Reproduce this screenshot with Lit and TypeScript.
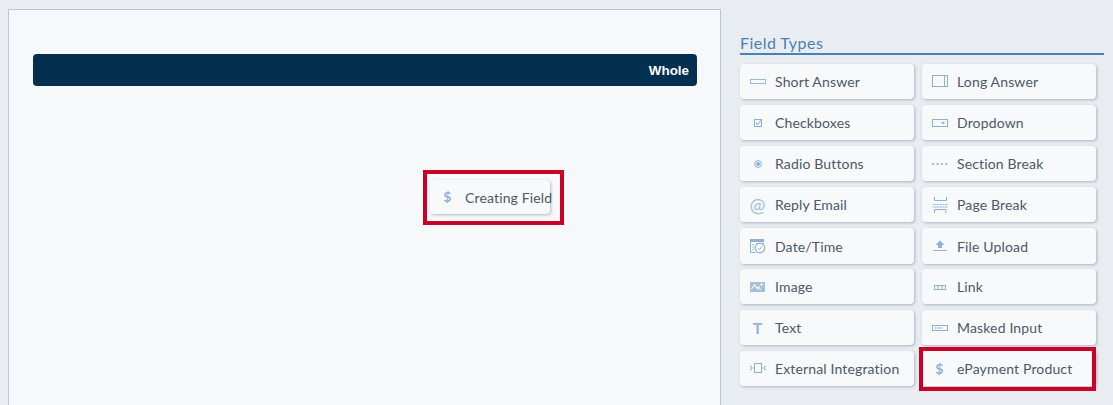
import { LitElement, html, css, svg } from "lit";
import { customElement } from "lit/decorators.js";

const s = (body: unknown) => html`<svg class="ico" viewBox="0 0 18 18" width="18" height="18" fill="none" stroke="#8fb0d3" stroke-width="1">${body}</svg>`;

const icons: Record<string, unknown> = {
  short: s(svg`<rect x="1.5" y="6.5" width="15" height="4" stroke="#9db8d6"/>`),
  long: s(svg`<rect x="1.5" y="2.5" width="15" height="11"/><path d="M13.5 3v10" />`),
  check: s(svg`<rect x="5.5" y="5.5" width="7" height="7"/><path d="M7 9l1.5 1.5L12 6.5" stroke-width="1.1"/>`),
  drop: s(svg`<rect x="1.5" y="5.5" width="15" height="7"/><path d="M10 8h4l-2 2.4z" fill="#8fb0d3" stroke="none"/>`),
  radio: s(svg`<circle cx="9" cy="9" r="3.4"/><circle cx="9" cy="9" r="2" fill="#8fb0d3" stroke="none"/>`),
  section: s(svg`<path d="M1 9h16" stroke-width="1.5" stroke-dasharray="2.2 2.2"/>`),
  email: html`<span class="glyph at">@</span>`,
  page: s(svg`<path d="M3.5 1v3.5h12V1M1.5 8.5h15M1.5 11h15" stroke-width="1"/><path d="M1.5 8.5h15M1.5 11h15" stroke="#f7f9fb" stroke-width="1.2" stroke-dasharray="1 2"/><path d="M3.5 17v-3.500h11.500V17"/>`),
  date: s(svg`<path d="M1 2h14v3H1z" fill="#8fb0d3" stroke="none"/><path d="M1.500 5v10.500h5M1.500 2v3"/><path d="M3 7.500h2M3 10h2M3 12.500h2" stroke="#a9c2dc"/><circle cx="11" cy="11" r="4.800" stroke-width="1.200"/><path d="M9 11l1.500 1.500 2.500-3"/><path d="M7.500 6l1.500 1M14.500 6L13 7" stroke-width="1.200"/>`),
  upload: s(svg`<path d="M9 3.500l4.500 4.500H11v3H7V8H4.500z" fill="#8fb0d3" stroke="none"/><path d="M2 13.500h14"/>`),
  image: s(svg`<rect x="1" y="4" width="15" height="10" fill="#a3bfdb" stroke="none"/><path d="M2.500 11l3-4 3 3.500 1.500-1.500 1.500 3" stroke="#f7f9fb" stroke-width="1.200"/><circle cx="12.500" cy="6.500" r="1.200" fill="#f7f9fb" stroke="none"/>`),
  link: s(svg`<rect x="3.500" y="7.500" width="11" height="4"/><path d="M7 8v3M11 8v3"/>`),
  text: html`<span class="glyph t">T</span>`,
  masked: s(svg`<rect x="1.500" y="6.500" width="15" height="5"/><path d="M4 9h7" stroke-width="1.600" stroke-dasharray="1.500 1.300"/>`),
  ext: s(svg`<rect x="5.500" y="3.500" width="7" height="9"/><path d="M1 6.500h1.500v3H1M3.500 8h2M17 6.500h-1.500v3H17M14.500 8h-2" stroke-width=".9"/>`),
  pay: html`<span class="glyph dollar">$</span>`,
};

const fields: [string, string][] = [
  ["short", "Short Answer"], ["long", "Long Answer"],
  ["check", "Checkboxes"], ["drop", "Dropdown"],
  ["radio", "Radio Buttons"], ["section", "Section Break"],
  ["email", "Reply Email"], ["page", "Page Break"],
  ["date", "Date/Time"], ["upload", "File Upload"],
  ["image", "Image"], ["link", "Link"],
  ["text", "Text"], ["masked", "Masked Input"],
  ["ext", "External Integration"], ["pay", "ePayment Product"],
];

@customElement("app-root")
export class AppRoot extends LitElement {
  static styles = css`
    :host { display: block; width: 1113px; height: 405px; overflow: hidden; background: #e9edf2; font-family: "Lato", "Noto Sans", sans-serif; }
    .page { display: flex; align-items: flex-start; padding: 9px 0 0 8px; }
    .canvas { position: relative; box-sizing: border-box; width: 713px; height: 460px; padding: 44px 23px 0 24px; background: #f7f8fa; border: 1px solid #b5c9dd; flex: none; }
    .bar { height: 32px; background: #03304f; border-radius: 4px; color: #fff; display: flex; align-items: center; justify-content: flex-end; padding-right: 8px; font: bold 13.4px "Liberation Sans", sans-serif; }
    .frame { position: absolute; left: 414px; top: 160px; display: flex; padding: 6px 10px 7px 3px; border: 4px solid #cb0029; }
    .ghost { width: 120px; height: 34px; }
    .side { margin-left: 19px; width: 364px; flex: none; padding-top: 22px; }
    h2 { margin: 0 0 9px; height: 24px; line-height: 23px; box-sizing: border-box; border-bottom: 2px solid #4a81b4; color: #4a81b4; font-size: 16px; font-weight: 400; letter-spacing: .45px; }
    .grid { display: grid; grid-template-columns: 174px 174px; column-gap: 8px; grid-auto-rows: 35px; row-gap: 6px; }
    .card { position: relative; display: flex; align-items: center; background: #f7f9fb; border-radius: 4px; box-shadow: 1px 1px 3px rgba(90, 110, 135, .45); color: #4d5868; font-size: 14px; letter-spacing: .15px; white-space: nowrap; }
    .icon { width: 35px; flex: none; display: flex; justify-content: center; align-items: center; }
    .ico { display: block; }
    .glyph { color: #94b3d4; font-weight: 700; line-height: 1; }
    .at { font-size: 19px; font-weight: 400; color: #a6c0dc; }
    .t { font-size: 16px; }
    .dollar { font-size: 14px; }
    .tall { margin-bottom: -1px; height: 36px; }
    .mark { position: absolute; left: -3px; right: 0; top: -4px; bottom: -5px; border: 4px solid #cb0029; pointer-events: none; }
  `;

  private card(key: string, label: string) {
    return html`<div class="card ${key === "date" || key === "upload" ? "tall" : ""}">
      <span class="icon">${icons[key]}</span><span>${label}</span>
      ${key === "pay" ? html`<span class="mark"></span>` : ""}
    </div>`;
  }

  render() {
    return html`<div class="page">
      <section class="canvas">
        <div class="bar">Whole</div>
        <div class="frame"><div class="card ghost"><span class="icon">${icons.pay}</span><span>Creating Field</span></div></div>
      </section>
      <aside class="side">
        <h2>Field Types</h2>
        <div class="grid">${fields.map(([k, l]) => this.card(k, l))}</div>
      </aside>
    </div>`;
  }
}
